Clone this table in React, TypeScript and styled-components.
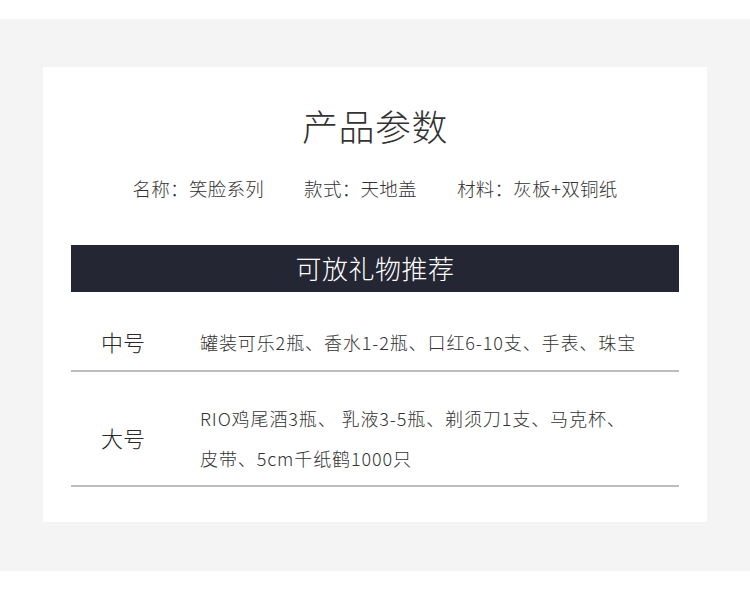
import styled, { createGlobalStyle } from 'styled-components';

const GlobalStyle = createGlobalStyle`
  html, body {
    margin: 0;
    padding: 0;
    background: #ffffff;
  }
  body {
    font-family: "Noto Sans CJK SC", "Noto Sans", sans-serif;
    color: #333;
  }
`;

const specs = [
  { name: '名称', value: '笑脸系列' },
  { name: '款式', value: '天地盖' },
  { name: '材料', value: '灰板+双铜纸' },
];

const gifts = [
  { size: '中号', lines: ['罐装可乐2瓶、香水1-2瓶、口红6-10支、手表、珠宝'] },
  { size: '大号', lines: ['RIO鸡尾酒3瓶、 乳液3-5瓶、剃须刀1支、马克杯、', '皮带、5cm千纸鹤1000只'] },
];

export default function App() {
  return (
    <>
      <GlobalStyle />
      <Page>
        <Backdrop>
          <Card>
            <Title>产品参数</Title>
            <SpecLine>
              {specs.map((s) => (
                <Spec key={s.name}>
                  {s.name}：{s.value}
                </Spec>
              ))}
            </SpecLine>
            <Banner>可放礼物推荐</Banner>
            {gifts.map((g) => (
              <GiftRow key={g.size} $multi={g.lines.length > 1}>
                <SizeLabel>{g.size}</SizeLabel>
                <GiftText>
                  {g.lines.map((l) => (
                    <div key={l}>{l}</div>
                  ))}
                </GiftText>
              </GiftRow>
            ))}
          </Card>
        </Backdrop>
      </Page>
    </>
  );
}

const Page = styled.div`
  padding: 19px 0 18px;
  background: #fff;
`;

const Backdrop = styled.div`
  background: #f4f4f4;
  padding: 48px 43px 49px;
`;

const Card = styled.div`
  background: #fff;
  padding: 36px 28px 35px;
`;

const Title = styled.h1`
  margin: 0;
  font-size: 36px;
  font-weight: 300;
  line-height: 44px;
  text-align: center;
  color: #333;
  letter-spacing: 0.5px;
`;

const SpecLine = styled.div`
  margin-top: 27px;
  display: flex;
  justify-content: center;
  gap: 40px;
  font-size: 18.5px;
  font-weight: 300;
  line-height: 28px;
  color: #333;
`;

const Spec = styled.span`
  letter-spacing: 0.3px;
`;

const Banner = styled.div`
  margin-top: 43px;
  height: 47px;
  background: #252633;
  color: #fff;
  font-size: 26px;
  font-weight: 300;
  line-height: 46px;
  text-align: center;
  letter-spacing: 0.5px;
`;

const GiftRow = styled.div<{ $multi: boolean }>`
  display: grid;
  grid-template-columns: 99px 1fr;
  align-items: center;
  padding: ${(p) => (p.$multi ? '26px 0 7px 30px' : '30px 0 8px 30px')};
  border-bottom: 2px solid #bdbdbd;
`;

const SizeLabel = styled.div`
  font-size: 22px;
  font-weight: 300;
  color: #2a2a2a;
  line-height: 34px;
  margin-top: -3px;
`;

const GiftText = styled.div`
  font-size: 18px;
  font-weight: 300;
  color: #333;
  line-height: 40px;
  letter-spacing: 0.9px;
`;
